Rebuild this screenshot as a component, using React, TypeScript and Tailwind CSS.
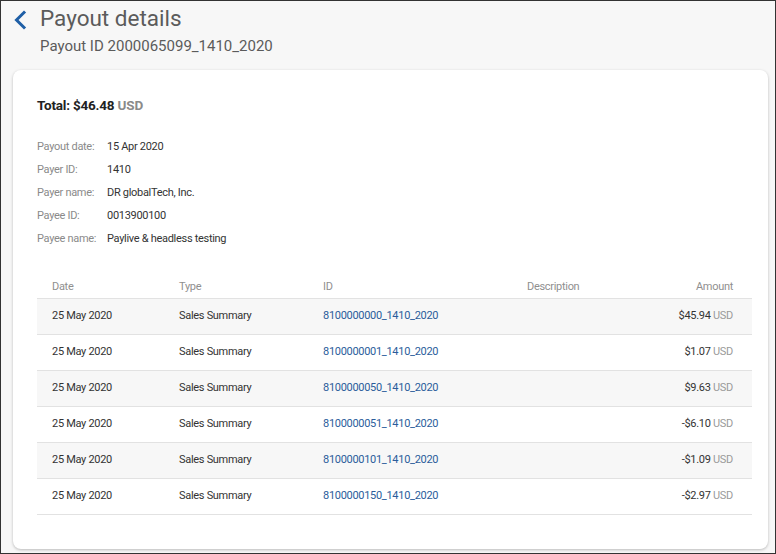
const details = [
  { label: "Payout date:", value: "15 Apr 2020" },
  { label: "Payer ID:", value: "1410" },
  { label: "Payer name:", value: "DR globalTech, Inc." },
  { label: "Payee ID:", value: "0013900100" },
  { label: "Payee name:", value: "Paylive & headless testing" },
];

const rows = [
  { date: "25 May 2020", type: "Sales Summary", id: "8100000000_1410_2020", amount: "$45.94" },
  { date: "25 May 2020", type: "Sales Summary", id: "8100000001_1410_2020", amount: "$1.07" },
  { date: "25 May 2020", type: "Sales Summary", id: "8100000050_1410_2020", amount: "$9.63" },
  { date: "25 May 2020", type: "Sales Summary", id: "8100000051_1410_2020", amount: "-$6.10" },
  { date: "25 May 2020", type: "Sales Summary", id: "8100000101_1410_2020", amount: "-$1.09" },
  { date: "25 May 2020", type: "Sales Summary", id: "8100000150_1410_2020", amount: "-$2.97" },
];

export default function App() {
  return (
    <div className="w-[776px] h-[554px] overflow-hidden border border-[#333] bg-[#f7f7f7] font-['Roboto',sans-serif]">
      {/* Header */}
      <div className="flex items-start pt-[3px] pl-[11px]">
        <button className="mt-[6px] w-[16px] h-[20px] text-[#1f5fa6]">
          <svg width="16" height="20" viewBox="0 0 16 20" fill="none">
            <path d="M12 2.5 L4.5 10 L12 17.5" stroke="currentColor" strokeWidth="3" strokeLinecap="square" />
          </svg>
        </button>
        <div className="ml-[12px]">
          <h1 className="text-[22.5px] leading-7 text-[#5b5b5b]">Payout details</h1>
          <p className="mt-[4px] text-[15px] leading-5 text-[#5b5b5b]">Payout ID 2000065099_1410_2020</p>
        </div>
      </div>

      {/* Card */}
      <div className="mt-[14px] ml-[12px] w-[755px] h-[479px] rounded-[8px] bg-white shadow-[0_1px_3px_rgba(0,0,0,0.25)] pt-[25px] px-[24px]">
        <div className="text-[13.5px] leading-5 font-bold text-[#222] tracking-[-0.2px]">
          Total: $46.48 <span className="text-[#8a8a8a]">USD</span>
        </div>

        <div className="mt-[20px] tracking-[-0.3px]">
          {details.map((d) => (
            <div key={d.label} className="flex text-[11px] leading-[23px]">
              <span className="w-[70px] text-[#8a8a8a]">{d.label}</span>
              <span className="text-[#333]">{d.value}</span>
            </div>
          ))}
        </div>

        <div className="mt-[27px] w-[715px] text-[11px] tracking-[-0.3px]">
          <div className="grid grid-cols-[127px_144px_204px_1fr_auto] h-[22px] items-center text-[#8f8f8f] border-b border-[#e2e2e2]">
            <span className="pl-[15px]">Date</span>
            <span className="pl-[15px]">Type</span>
            <span className="pl-[15px]">ID</span>
            <span className="pl-[15px]">Description</span>
            <span className="pr-[19px] text-right">Amount</span>
          </div>
          {rows.map((r, i) => (
            <div
              key={r.id}
              className={`grid grid-cols-[127px_144px_204px_1fr_auto] h-[36px] items-center border-b border-[#e2e2e2] ${i % 2 === 0 ? "bg-[#f7f7f7]" : "bg-white"}`}
            >
              <span className="pl-[15px] text-[#333]">{r.date}</span>
              <span className="pl-[15px] text-[#333]">{r.type}</span>
              <span className="pl-[15px] text-[#2b5d9b]">{r.id}</span>
              <span className="pl-[15px]"></span>
              <span className="pr-[19px] text-right text-[#333]">
                {r.amount} <span className="text-[#9a9a9a]">USD</span>
              </span>
            </div>
          ))}
        </div>
      </div>
    </div>
  );
}
